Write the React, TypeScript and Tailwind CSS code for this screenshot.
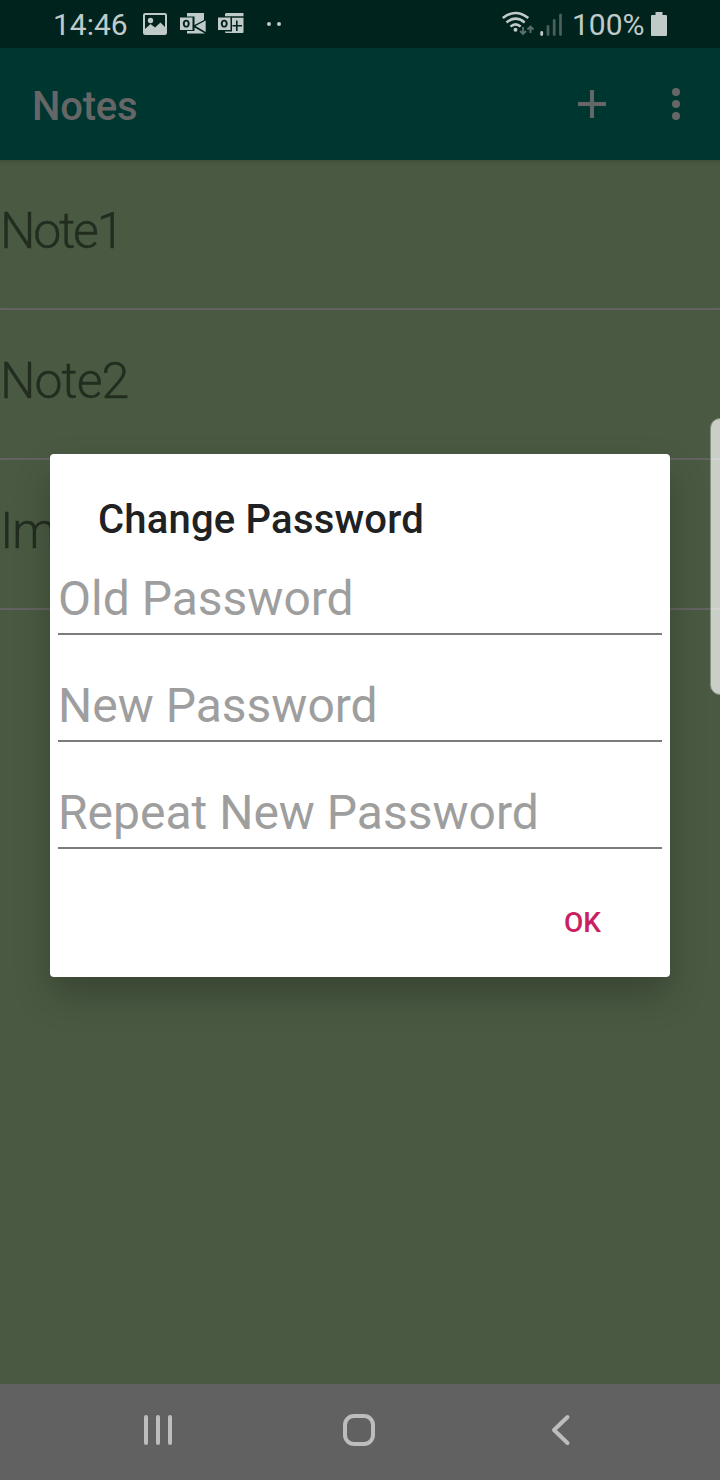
const notes = [
  { text: "Note1", tracking: "tracking-[-2.2px]" },
  { text: "Note2", tracking: "tracking-[-1px]" },
  { text: "Im", tracking: "tracking-[-1px]" },
];
const fields = ["Old Password", "New Password", "Repeat New Password"];

function PictureIcon() {
  return (
    <svg className="ml-[15px] h-6 w-6 shrink-0" viewBox="0 0 24 24">
      <rect x="1" y="2" width="22" height="20" rx="1.2" fill="none" stroke="#c0cac8" strokeWidth="2" />
      <circle cx="7.5" cy="8.5" r="2.7" fill="#c0cac8" />
      <path d="M2 17L7.5 12L12 15.5L17.5 10.5L22 15V22H2Z" fill="#c0cac8" />
    </svg>
  );
}

function MailIcon() {
  return (
    <svg className="ml-[13px] h-6 w-[26px] shrink-0" viewBox="0 0 26 24">
      <path d="M7 1H24V8L14.5 13V4.5H7Z" fill="#c0cac8" />
      <path d="M25.7 8.5V20L15.5 14Z" fill="#c0cac8" />
      <path d="M7 19H14.5V15.5L25 21.5H7Z" fill="#c0cac8" />
      <path fillRule="evenodd" d="M0 5.5H12.5V18H0ZM6.2 7.8C4.2 7.8 2.8 9.3 2.8 11.7S4.2 15.6 6.2 15.6S9.7 14.1 9.7 11.7S8.2 7.8 6.2 7.8ZM6.2 9.6C7.2 9.6 7.7 10.4 7.7 11.7S7.2 13.8 6.2 13.8S4.8 13 4.8 11.7S5.3 9.6 6.2 9.6Z" fill="#c0cac8" />
    </svg>
  );
}

function CalendarIcon() {
  return (
    <svg className="ml-3 h-6 w-[26px] shrink-0" viewBox="0 0 26 24">
      <path d="M8 1H25.5V4.3H7V2Z" fill="#c0cac8" />
      <path d="M14 5.8H25.5V20Q25.5 21 24.5 21H8Q7 21 7 19.5H14Z" fill="#c0cac8" />
      <path d="M14.5 13.7H24M18.8 8.5V19" stroke="#00231e" strokeWidth="1.6" />
      <path fillRule="evenodd" d="M0 5.5H12.5V18H0ZM6.2 7.8C4.2 7.8 2.8 9.3 2.8 11.7S4.2 15.6 6.2 15.6S9.7 14.1 9.7 11.7S8.2 7.8 6.2 7.8ZM6.2 9.6C7.2 9.6 7.7 10.4 7.7 11.7S7.2 13.8 6.2 13.8S4.8 13 4.8 11.7S5.3 9.6 6.2 9.6Z" fill="#c0cac8" />
    </svg>
  );
}

function StatusBar() {
  return (
    <div className="flex h-12 items-center bg-[#00231e] pr-[53px] pl-[53px] text-[#c0cac8]">
      <span className="w-[75px] pt-0.5 text-[30px] leading-[48px] whitespace-nowrap">14:46</span>
      <PictureIcon />
      <MailIcon />
      <CalendarIcon />
      <svg className="ml-[23px] h-6 w-4 shrink-0" viewBox="0 0 16 24">
        <circle cx="2" cy="12" r="2" fill="#c0cac8" />
        <circle cx="12" cy="12" r="2" fill="#c0cac8" />
      </svg>
      <div className="flex-1" />
      <svg className="h-7 w-[62px] shrink-0" viewBox="501 10 62 28">
        <g fill="none" stroke="#c0cac8" strokeWidth="2.6">
          <path d="M502.8 18Q515.5 8 528.3 18" />
          <path d="M506.5 22.4Q515.5 15 524.7 22.4" />
          <path d="M510.5 26.6Q515.5 22 520.7 26.6" />
        </g>
        <circle cx="515.5" cy="29.7" r="2" fill="#c0cac8" />
        <g fill="none" stroke="#5b706c" strokeWidth="1.9">
          <path d="M523 27V34M520 31L523 34L526 31M530.5 33V26.5M527.5 29.5L530.5 26.5L533.5 29.5" />
        </g>
        <g strokeLinecap="round" strokeWidth="2.8">
          <path d="M541.7 32.5V34.5" stroke="#c0cac8" />
          <path d="M548 26.5V34.5M554.2 20.5V34.5M560.5 15V34.5" stroke="#49605c" />
        </g>
      </svg>
      <span className="ml-[9px] w-[74px] pt-0.5 text-[30px] leading-[48px] whitespace-nowrap">100%</span>
      <svg className="ml-[5px] h-6 w-4 shrink-0" viewBox="0 0 16 24">
        <path d="M4.5 0H11.5V3H15Q16 3 16 4V23Q16 24 15 24H1Q0 24 0 23V4Q0 3 1 3H4.5Z" fill="#c0cac8" />
      </svg>
    </div>
  );
}

function Dialog() {
  return (
    <div className="flex h-[523px] w-[620px] flex-col rounded bg-white shadow-[0_18px_36px_rgba(0,0,0,0.24)]">
      <h2 className="h-[109px] pt-[42px] pl-12 text-[40px] leading-[48px] font-medium tracking-[0.2px] text-[#202122]">
        Change Password
      </h2>
      {fields.map((label) => (
        <div key={label} className="h-[107px] px-2">
          <div className="h-[72px] border-b-2 border-[#7c7c7c] text-[48px] leading-[72px] whitespace-nowrap text-[#9e9e9e]">
            {label}
          </div>
        </div>
      ))}
      <div className="flex h-[93px] justify-end pr-[69px]">
        <button className="h-12 text-[28px] leading-[78px] font-medium text-[#c82060]">OK</button>
      </div>
    </div>
  );
}

export default function App() {
  return (
    <div className="relative flex h-[1480px] w-[720px] flex-col overflow-hidden bg-[#4a5a42] font-['Roboto',sans-serif]">
      <StatusBar />
      <header className="flex h-28 items-center bg-[#003630] pr-[34px] pl-8">
        <h1 className="flex-1 pt-1.5 text-[40px] leading-[48px] font-medium tracking-[-0.2px] text-[#666666]">Notes</h1>
        <svg className="h-7 w-7" viewBox="0 0 28 28">
          <path d="M0 14H28M14 0V28" stroke="#666666" strokeWidth="4" />
        </svg>
        <svg className="ml-[60px] h-8 w-5" viewBox="0 0 20 32">
          <g fill="#666666">
            <circle cx="10" cy="4" r="4" />
            <circle cx="10" cy="16" r="4" />
            <circle cx="10" cy="28" r="4" />
          </g>
        </svg>
      </header>
      <main className="flex-1 shadow-[inset_0_5px_5px_-4px_rgba(0,0,0,0.2)]">
        {notes.map(({ text, tracking }) => (
          <div
            key={text}
            className={`h-[150px] border-b-2 border-[#636363] pt-[42px] text-[50px] leading-[58px] font-light text-[#222d20] [-webkit-text-stroke:0.4px_#222d20] ${tracking}`}
          >
            {text}
          </div>
        ))}
      </main>
      <nav className="flex h-24 items-center bg-[#616161] px-[143px] pb-1">
        <svg className="h-9 w-[434px]" viewBox="143 1412 434 36">
          <g fill="none" stroke="#bdbdbd" strokeWidth="4" strokeLinecap="round" strokeLinejoin="round">
            <path d="M146 1417V1443M158 1417V1443M170 1417V1443" />
            <rect x="345" y="1416" width="28" height="28" rx="9" />
            <path d="M567.5 1417L554 1430L567.5 1443" />
          </g>
        </svg>
      </nav>
      <div className="absolute top-[454px] left-[50px]">
        <Dialog />
      </div>
      <div className="absolute top-[418px] left-[710px] h-[277px] w-5 rounded-[12px] border border-[#899184] bg-[#c9cec6]" />
      <div className="absolute top-[458px] left-[711px] h-[2px] w-[9px] bg-[#d2d2d0]" />
      <div className="absolute top-[608px] left-[711px] h-[2px] w-[9px] bg-[#d2d2d0]" />
    </div>
  );
}
